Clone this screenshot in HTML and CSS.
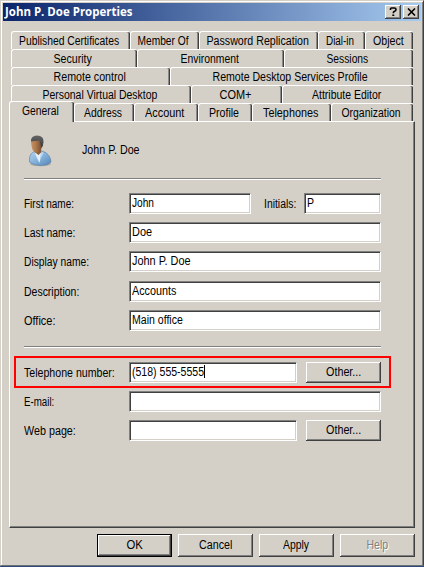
FILE: index.html
```html
<!DOCTYPE html>
<html lang="en">
<head>
<meta charset="utf-8">
<title>John P. Doe Properties</title>
<link rel="stylesheet" href="styles.css">
</head>
<body>
<div class="window">
  <header class="titlebar">
    <h1><span data-w="127">John P. Doe Properties</span></h1>
    <button class="caption" aria-label="Help"><svg width="9" height="10" viewBox="0 0 9 10"><path d="M1.500 3V1.800Q1.500 1 2.500 1H5.500Q7 1 7 2.500T5.500 4.300Q4.300 4.800 4.300 6.200M3.300 8.300H5.300" fill="none" stroke="#000" stroke-width="1.600"/></svg></button>
    <button class="caption close" aria-label="Close"><svg width="9" height="8" viewBox="0 0 9 8"><path d="M1 .5L8 7.500M8 .5L1 7.500" fill="none" stroke="#000" stroke-width="1.600"/></svg></button>
  </header>

  <nav class="tabs">
    <div class="row row1">
      <div class="tab"><span data-w="100">Published Certificates</span></div>
      <div class="tab"><span data-w="51">Member Of</span></div>
      <div class="tab"><span data-w="102">Password Replication</span></div>
      <div class="tab"><span data-w="28">Dial-in</span></div>
      <div class="tab"><span data-w="31">Object</span></div>
    </div>
    <div class="row row2">
      <div class="tab"><span data-w="38">Security</span></div>
      <div class="tab"><span data-w="58">Environment</span></div>
      <div class="tab"><span data-w="42">Sessions</span></div>
    </div>
    <div class="row row3">
      <div class="tab"><span data-w="72">Remote control</span></div>
      <div class="tab"><span data-w="155">Remote Desktop Services Profile</span></div>
    </div>
    <div class="row row4">
      <div class="tab"><span data-w="115">Personal Virtual Desktop</span></div>
      <div class="tab"><span data-w="32">COM+</span></div>
      <div class="tab"><span data-w="69">Attribute Editor</span></div>
    </div>
    <div class="row row5">
      <div class="tab active"><span data-w="37">General</span></div>
      <div class="tab"><span data-w="38">Address</span></div>
      <div class="tab"><span data-w="39">Account</span></div>
      <div class="tab"><span data-w="30">Profile</span></div>
      <div class="tab"><span data-w="55">Telephones</span></div>
      <div class="tab"><span data-w="59">Organization</span></div>
    </div>
  </nav>

  <main class="panel">
    <div class="identity">
      <svg class="user" width="24" height="32" viewBox="0 0 24 32">
        <defs>
          <linearGradient id="coat" x1="0" y1="0" x2="1" y2="1"><stop offset="0" stop-color="#b5d6f2"/><stop offset=".55" stop-color="#7fadd8"/><stop offset="1" stop-color="#5484b4"/></linearGradient>
          <linearGradient id="skin"><stop offset="0" stop-color="#c89569"/><stop offset=".5" stop-color="#a87448"/><stop offset="1" stop-color="#6d482d"/></linearGradient>
          <linearGradient id="hair" x1="0" y1="0" x2="0" y2="1"><stop offset="0" stop-color="#666"/><stop offset="1" stop-color="#343638"/></linearGradient>
        </defs>
        <ellipse cx="12.500" cy="29" rx="10.500" ry="2.200" fill="#aaa69f"/>
        <path d="M1.500 27C1 21 3 17.500 7 16.500L13 16C19 17 22.500 21 23 27Q20 30.500 13 30.500T1.500 27Z" fill="url(#coat)" stroke="#5c86ae" stroke-width=".7"/>
        <path d="M6.500 17L13 18L12.500 23L11.500 28L8.500 22Z" fill="#e4eff9"/>
        <path d="M13 16L15.500 18L12.500 24Z" fill="#b9d8f0"/>
        <path d="M6 14H13L13.500 17L10.500 20L6.500 17Z" fill="#8b5d3b"/>
        <path d="M3 7Q3 3 8 3Q14 3 14 9Q14 17 8.500 18Q3.500 17 3 7Z" fill="url(#skin)"/>
        <path d="M3 6.500Q2.500 1 9 .5Q16 .5 15.500 7Q15.300 11 13.500 13L12.500 9L11.500 5.500Q7 6 3 6.500Z" fill="url(#hair)"/>
      </svg>
      <span class="name" data-w="58">John P. Doe</span>
    </div>
    <hr>
    <form class="fields names">
      <div class="field"><label><span data-w="50">First name:</span></label><div class="input first"><span data-w="22">John</span></div><label class="initials"><span data-w="32">Initials:</span></label><div class="input grow"><span data-w="7">P</span></div></div>
      <div class="field"><label><span data-w="51">Last name:</span></label><div class="input grow"><span data-w="20">Doe</span></div></div>
      <div class="field"><label><span data-w="65">Display name:</span></label><div class="input grow"><span data-w="59">John P. Doe</span></div></div>
      <div class="field gap"><label><span data-w="55">Description:</span></label><div class="input grow"><span data-w="44">Accounts</span></div></div>
      <div class="field"><label><span data-w="31">Office:</span></label><div class="input grow"><span data-w="51">Main office</span></div></div>
    </form>
    <hr>
    <form class="fields contact">
      <div class="field marked"><label><span data-w="91">Telephone number:</span></label><div class="input phone"><span data-w="72">(518) 555-5555</span><i class="caret"></i></div><button type="button" class="btn"><span data-w="35">Other...</span></button></div>
      <div class="field"><label><span data-w="30">E-mail:</span></label><div class="input grow"></div></div>
      <div class="field"><label><span data-w="52">Web page:</span></label><div class="input phone"></div><button type="button" class="btn"><span data-w="35">Other...</span></button></div>
    </form>
  </main>

  <footer class="actions">
    <button class="btn default"><span data-w="16">OK</span></button>
    <button class="btn"><span data-w="33">Cancel</span></button>
    <button class="btn"><span data-w="26">Apply</span></button>
    <button class="btn disabled"><span data-w="22">Help</span></button>
  </footer>
</div>
<script src="fit.js"></script>
</body>
</html>
```
FILE: styles.css
```css
* { box-sizing: border-box; }
body { margin: 0; width: 424px; height: 567px; overflow: hidden; background: #2c4a78; font: 12px/14px "Liberation Sans", Arial, sans-serif; color: #000; }
button { font: inherit; color: inherit; padding: 0; }
span[data-w] { display: inline-block; white-space: nowrap; transform-origin: left center; }
.window { width: 424px; height: 566px; background: #d4d0c8; border: 1px solid #d4d0c8; border-right-color: #404040; border-bottom-color: #6c7078; box-shadow: inset 1px 1px #fff, inset -1px 0 #808080; padding: 2px; }

.titlebar { display: flex; align-items: center; height: 18px; width: 418px; padding-right: 2px; background: linear-gradient(90deg, #0a246a, #a6caf0); }
.titlebar h1 { flex: 1; margin: 0 0 0 2px; color: #fff; font: bold 12px/16px "Open Sans", "Noto Sans", sans-serif; }
.caption { display: flex; align-items: center; justify-content: center; width: 16px; height: 14px; background: #d4d0c8; border: 0; box-shadow: inset -1px -1px #404040, inset 1px 1px #fff, inset -2px -2px #808080; }
.close { margin-left: 2px; }

.tabs { margin: 10px 0 0 8px; width: 402px; }
.row { display: grid; height: 18px; }
.row1 { grid-template-columns: 119px 69px 119px 47px 48px; }
.row2 { grid-template-columns: 126px 147px 129px; }
.row3 { grid-template-columns: 159px 243px; }
.row4 { grid-template-columns: 180px 91px 131px; }
.row5 { grid-template-columns: 63px 60px 64px 54px 79px 82px; }
.tab { display: flex; justify-content: center; padding: 2px 3px 0 0; border: 1px solid #fff; border-width: 1px 0 0 1px; border-radius: 3px 2px 0 0; box-shadow: inset -1px 0 #404040, inset -2px 0 #8c8984; }
.tab span, .btn span { transform-origin: center; }
.active { position: relative; z-index: 1; margin: -2px 0 -1px -2px; background: #d4d0c8; }

.panel { width: 406px; height: 407px; margin-left: 6px; padding: 13px 0 0 14px; border: 1px solid #fff; border-right-color: #404040; border-bottom-color: #404040; box-shadow: inset -1px -1px #808080; }
.identity { display: flex; height: 43px; }
.user { margin-left: 4px; }
.name { margin: 8px 0 0 30px; }
hr { width: 357px; height: 2px; margin: 0; border: 0; border-top: 1px solid #808080; border-bottom: 1px solid #fff; }
.fields { display: flex; flex-direction: column; gap: 8px; width: 357px; margin: 0; }
.names { padding: 13px 0 15px; }
.contact { padding-top: 14px; }
.field { display: flex; align-items: center; height: 21px; position: relative; }
.gap { margin-top: 1px; }
label { width: 105px; flex: none; }
.initials { width: 53px; padding-left: 13px; }
.input { display: flex; align-items: center; height: 21px; padding: 1px 0 3px 2px; background: #fff; border: 1px solid; border-color: #808080 #fff #fff #808080; box-shadow: inset 1px 1px #404040, inset -1px -1px #d4d0c8; }
.first { width: 122px; }
.grow { flex: 1; }
.phone { width: 168px; margin-right: 9px; }
.caret { width: 1px; height: 13px; background: #000; }
.btn { display: flex; align-items: center; justify-content: center; width: 75px; height: 21px; background: #d4d0c8; border: 0; box-shadow: inset -1px -1px #404040, inset 1px 1px #fff, inset -2px -2px #808080; }
.marked::after { content: ""; position: absolute; inset: -6px -10px -5px -10px; border: 2px solid #f00; }
.actions { display: flex; gap: 6px; margin: 6px 0 0 94px; }
.btn { padding: 0 0 1px; }
.actions .btn { height: 23px; }
.default { border: 1px solid #000; }
.disabled { color: #808080; text-shadow: 1px 1px #fff; }
```
FILE: fit.js
```js
// Condense every caption to its dialog-font width.
document.querySelectorAll('[data-w]').forEach(function (el) {
  var natural = el.offsetWidth;
  var target = Number(el.dataset.w);
  el.style.transform = 'scaleX(' + target / natural + ')';
  if (el.nextElementSibling && el.nextElementSibling.className === 'caret') {
    el.style.marginRight = (target - natural) + 'px';
  }
});
```
